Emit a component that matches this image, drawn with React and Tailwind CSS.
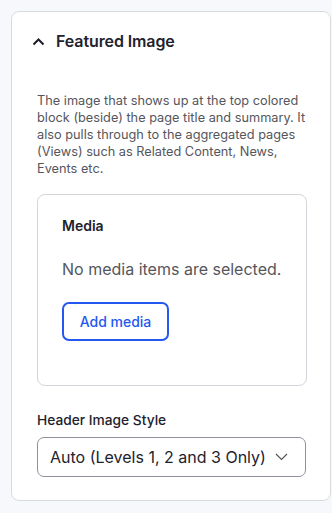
export default function App() {
  return (
    <div className="w-[332px] h-[513px] bg-[#f7f8fc] pt-[11px] pl-[11px]" style={{ fontFamily: "Inter, 'Noto Sans', sans-serif" }}>
      <div className="w-[320px] h-[490px] bg-white border border-[#d9dae0] rounded-[8px] flex flex-col">
        <div className="h-[58px] flex items-center pl-[20px]">
          <svg width="13" height="9" viewBox="0 0 13 9" className="mr-[11px]">
            <path d="M1.5 7.5 L6.5 2.5 L11.5 7.5" fill="none" stroke="#1e1f2b" strokeWidth="2" />
          </svg>
          <span className="text-[16px] font-semibold text-[#22222e] tracking-[-0.1px]">Featured Image</span>
        </div>
        <div className="pl-[25px] pr-[24px]">
          <p className="mt-[22px] text-[12.75px] leading-[17px] text-[#55565c]">
            The image that shows up at the top colored block (beside) the page title and summary. It also pulls through to the aggregated pages (Views) such as Related Content, News, Events etc.
          </p>
          <div className="mt-[17px] w-[270px] h-[192px] border border-[#d4d5db] rounded-[8px] pl-[24px] pt-[21px]">
            <div className="text-[14px] leading-[20px] font-semibold text-[#22222e]">Media</div>
            <div className="mt-[22px] text-[16px] leading-[22px] text-[#55565c]">No media items are selected.</div>
            <button className="mt-[22px] w-[107px] h-[39px] border-2 border-[#2458f0] rounded-[7px] text-[14px] font-medium text-[#2458f0] flex items-center justify-center">
              Add media
            </button>
          </div>
          <div className="mt-[24px] text-[13.75px] leading-[20px] font-medium text-[#22222e]">Header Image Style</div>
          <div className="mt-[7px] w-[269px] h-[40px] border border-[#8e929c] rounded-[7px] flex items-center pl-[12px] pr-[17px] justify-between">
            <span className="text-[16px] text-[#22222e]">Auto (Levels 1, 2 and 3 Only)</span>
            <svg width="13" height="8" viewBox="0 0 13 8">
              <path d="M1 1 L6.5 6.5 L12 1" fill="none" stroke="#55565c" strokeWidth="1.2" />
            </svg>
          </div>
        </div>
      </div>
    </div>
  );
}
